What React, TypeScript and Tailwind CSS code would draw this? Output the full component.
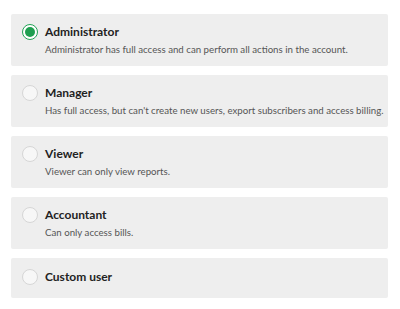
const roles = [
  {
    name: "Administrator",
    desc: "Administrator has full access and can perform all actions in the account.",
  },
  {
    name: "Manager",
    desc: "Has full access, but can't create new users, export subscribers and access billing.",
  },
  { name: "Viewer", desc: "Viewer can only view reports." },
  { name: "Accountant", desc: "Can only access bills." },
  { name: "Custom user", desc: "" },
];

export default function App() {
  const selected = 0;
  return (
    <div className="min-h-screen bg-white px-[11px] pt-[14px] font-['Lato',sans-serif]">
      <div className="flex w-[377px] flex-col gap-[9px]">
        {roles.map((role, i) => (
          <label
            key={role.name}
            className={`flex items-start rounded-[2px] bg-[#eeeeee] pl-[11px] ${
              role.desc ? "h-[52px] pt-[10px]" : "h-[40px] pt-[11px]"
            }`}
          >
            {i === selected ? (
              <span className="flex h-[16px] w-[16px] shrink-0 items-center justify-center rounded-full border-[1.5px] border-[#22a355] bg-white">
                <span className="h-[10px] w-[10px] rounded-full bg-[#1e9e4f]" />
              </span>
            ) : (
              <span className="h-[16px] w-[16px] shrink-0 rounded-full border border-[#d6d6d6] bg-[#f7f7f7]" />
            )}
            <div className="ml-[7px] flex flex-col">
              <span className="text-[12px] leading-[16px] font-bold text-[#222]">
                {role.name}
              </span>
              {role.desc && (
                <span className="mt-[3px] whitespace-nowrap text-[9.7px] leading-[13px] text-[#555]">
                  {role.desc}
                </span>
              )}
            </div>
          </label>
        ))}
      </div>
    </div>
  );
}
